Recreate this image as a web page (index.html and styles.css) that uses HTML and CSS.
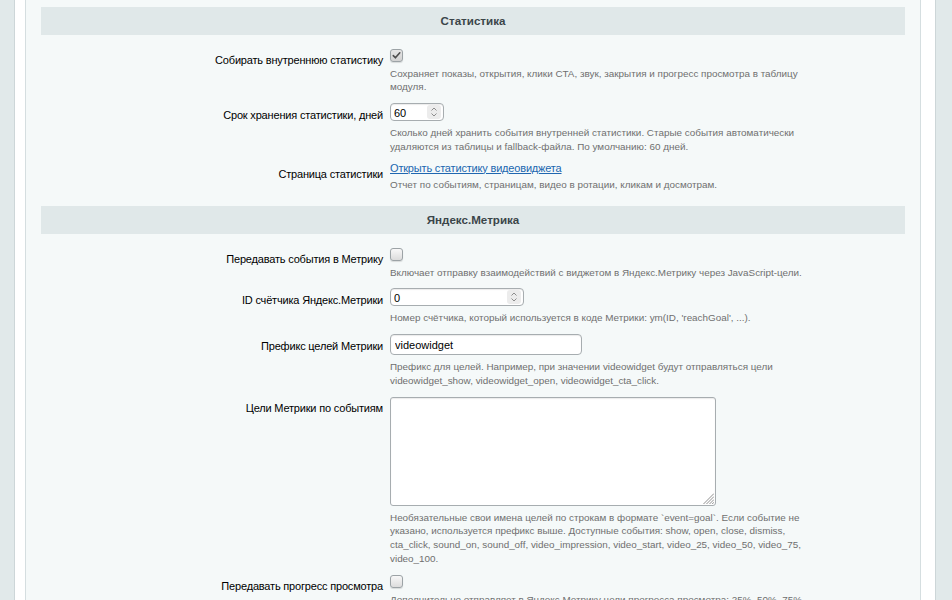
FILE: index.html
```html
<!DOCTYPE html>
<html lang="ru">
<head>
<meta charset="utf-8">
<title>Настройки видеовиджета</title>
<link rel="stylesheet" href="styles.css">
</head>
<body>
<div class="frame">
  <div class="panel">
    <div class="section-head">Статистика</div>

    <div class="row">
      <div class="label">Собирать внутреннюю статистику</div>
      <div class="field">
        <span class="cb checked"><svg class="check" viewBox="0 0 11 11" width="11" height="11"><polyline points="2.3,5.6 4.4,7.8 8.8,2.8" fill="none" stroke="#4d4d4d" stroke-width="1.6" stroke-linecap="round" stroke-linejoin="round"/></svg></span>
        <div class="desc">Сохраняет показы, открытия, клики CTA, звук, закрытия и прогресс просмотра в таблицу модуля.</div>
      </div>
    </div>

    <div class="row">
      <div class="label">Срок хранения статистики, дней</div>
      <div class="field">
        <div class="num num-short">
          <input class="num-input" type="text" value="60">
          <span class="spin"><svg viewBox="0 0 14 14" width="14" height="14"><polyline points="4.5,5.5 7,3 9.5,5.5" fill="none" stroke="#8d8d8d" stroke-width="1"/><polyline points="4.5,8.5 7,11 9.5,8.5" fill="none" stroke="#8d8d8d" stroke-width="1"/></svg></span>
        </div>
        <div class="desc">Сколько дней хранить события внутренней статистики. Старые события автоматически удаляются из таблицы и fallback-файла. По умолчанию: 60 дней.</div>
      </div>
    </div>

    <div class="row">
      <div class="label">Страница статистики</div>
      <div class="field">
        <a class="link" href="#">Открыть статистику видеовиджета</a>
        <div class="desc desc-tight">Отчет по событиям, страницам, видео в ротации, кликам и досмотрам.</div>
      </div>
    </div>

    <div class="section-head">Яндекс.Метрика</div>

    <div class="row">
      <div class="label">Передавать события в Метрику</div>
      <div class="field">
        <span class="cb"></span>
        <div class="desc">Включает отправку взаимодействий с виджетом в Яндекс.Метрику через JavaScript-цели.</div>
      </div>
    </div>

    <div class="row">
      <div class="label">ID счётчика Яндекс.Метрики</div>
      <div class="field">
        <div class="num num-long">
          <input class="num-input" type="text" value="0">
          <span class="spin"><svg viewBox="0 0 14 14" width="14" height="14"><polyline points="4.5,5.5 7,3 9.5,5.5" fill="none" stroke="#8d8d8d" stroke-width="1"/><polyline points="4.5,8.5 7,11 9.5,8.5" fill="none" stroke="#8d8d8d" stroke-width="1"/></svg></span>
        </div>
        <div class="desc">Номер счётчика, который используется в коде Метрики: ym(ID, 'reachGoal', ...).</div>
      </div>
    </div>

    <div class="row">
      <div class="label">Префикс целей Метрики</div>
      <div class="field">
        <input class="text-input" type="text" value="videowidget">
        <div class="desc">Префикс для целей. Например, при значении videowidget будут отправляться цели videowidget_show, videowidget_open, videowidget_cta_click.</div>
      </div>
    </div>

    <div class="row">
      <div class="label">Цели Метрики по событиям</div>
      <div class="field">
        <div class="ta-wrap">
          <textarea class="ta"></textarea>
          <svg class="grip" viewBox="0 0 11 11" width="11" height="11"><g stroke="#8f8f8f" stroke-width="1"><line x1="11" y1="0.5" x2="0.5" y2="11"/><line x1="11" y1="3.5" x2="3.5" y2="11"/><line x1="11" y1="6.5" x2="6.5" y2="11"/><line x1="11" y1="9.2" x2="9.2" y2="11"/></g></svg>
        </div>
        <div class="desc">Необязательные свои имена целей по строкам в формате `event=goal`. Если событие не указано, используется префикс выше. Доступные события: show, open, close, dismiss, cta_click, sound_on, sound_off, video_impression, video_start, video_25, video_50, video_75, video_100.</div>
      </div>
    </div>

    <div class="row">
      <div class="label">Передавать прогресс просмотра</div>
      <div class="field">
        <span class="cb"></span>
        <div class="desc">Дополнительно отправляет в Яндекс.Метрику цели прогресса просмотра: 25%, 50%, 75% и 100% видео.</div>
      </div>
    </div>
  </div>
</div>
</body>
</html>
```
FILE: styles.css
```css
html, body {
  margin: 0;
  padding: 0;
}
body {
  background: #e1e9ea;
  font-family: "Liberation Sans", Arial, sans-serif;
  color: #000;
  height: 600px;
  overflow: hidden;
}
.frame {
  margin-left: 14px;
  width: 922px;
  box-sizing: border-box;
  border-left: 1px solid #cdd6d8;
  border-right: 1px solid #cdd6d8;
  background: #ffffff;
  padding: 0 14px 0 10px;
  min-height: 600px;
}
.panel {
  background: #f5f9f9;
  border-left: 1px solid #d5dee0;
  border-right: 1px solid #d5dee0;
  padding: 7px 15px 20px;
  min-height: 600px;
  box-sizing: border-box;
}
.section-head {
  height: 28px;
  line-height: 28px;
  background: #e0e8e9;
  text-align: center;
  font-weight: bold;
  font-size: 11.6px;
  color: #3b4549;
  margin: 9.75px 0 9.5px;
}
.section-head:first-child {
  margin-top: 0;
}
.row {
  display: grid;
  grid-template-columns: 345px 1fr;
  padding: 4px 0 5px;
}
.label {
  text-align: right;
  padding: 4.5px 3px 0 0;
  font-size: 11px;
  letter-spacing: -0.18px;
  line-height: 15px;
}
.field {
  padding-left: 4px;
}
.desc {
  max-width: 420px;
  margin-top: 5px;
  font-size: 9.9px;
  line-height: 13.75px;
  color: #6f6f6f;
}
.desc-tight {
  margin-top: 2px;
}
.cb {
  display: block;
  width: 13px;
  height: 13px;
  box-sizing: border-box;
  border: 1px solid #9ca3a6;
  border-radius: 3px;
  background: linear-gradient(#f8f8f8, #dcdcdc);
  box-shadow: 0 1px 1px rgba(0, 0, 0, 0.12);
}
.cb.checked {
  background: linear-gradient(#e6e6e6, #d2d2d2);
}
.check {
  display: block;
}
.num {
  display: flex;
  align-items: center;
  height: 18px;
  box-sizing: border-box;
  border: 1px solid #a7adb0;
  border-radius: 4px;
  background: #fff;
  box-shadow: inset 0 1px 1px rgba(0, 0, 0, 0.08);
}
.num-short {
  width: 54px;
}
.num-long {
  width: 134px;
}
.num-input {
  flex: 1;
  min-width: 0;
  border: 0;
  outline: 0;
  background: transparent;
  padding: 1px 0 0 3px;
  margin: 0;
  font-family: "Liberation Sans", Arial, sans-serif;
  font-size: 11px;
  line-height: 15px;
  height: 16px;
  box-sizing: border-box;
  color: #000;
}
.spin {
  display: block;
  width: 14px;
  height: 14px;
  margin-right: 2px;
  background: #ececec;
  border-radius: 3px;
}
.spin svg {
  display: block;
}
.text-input {
  display: block;
  width: 192px;
  height: 21px;
  box-sizing: border-box;
  border: 1px solid #a7adb0;
  border-radius: 4px;
  background: #fff;
  box-shadow: inset 0 1px 1px rgba(0, 0, 0, 0.08);
  padding: 0 0 0 4px;
  margin: 0;
  outline: 0;
  font-family: "Liberation Sans", Arial, sans-serif;
  font-size: 11px;
  color: #000;
}
.link {
  display: block;
  width: fit-content;
  margin-top: -2px;
  font-size: 11px;
  letter-spacing: -0.18px;
  line-height: 15px;
  color: #2067b0;
  text-decoration: underline;
}
.ta-wrap {
  position: relative;
  width: 326px;
  height: 109px;
}
.ta {
  display: block;
  width: 100%;
  height: 100%;
  box-sizing: border-box;
  border: 1px solid #a7adb0;
  border-radius: 3px;
  background: #fff;
  box-shadow: inset 0 1px 1px rgba(0, 0, 0, 0.08);
  resize: none;
  margin: 0;
  outline: 0;
  font-family: "Liberation Sans", Arial, sans-serif;
  font-size: 11px;
}
.grip {
  position: absolute;
  right: 2px;
  bottom: 2px;
}
```
